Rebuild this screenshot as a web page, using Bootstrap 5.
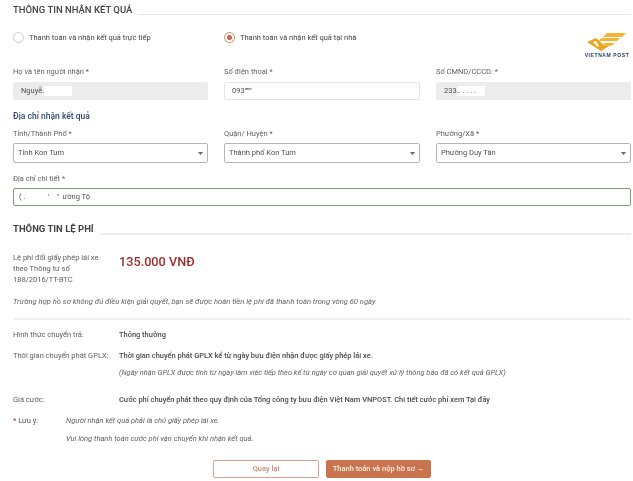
<!DOCTYPE html>
<html lang="vi">
<head>
    <meta charset="UTF-8">
    <meta name="viewport" content="width=device-width, initial-scale=1.0">
    <title>Thông tin nhận kết quả</title>
    <link href="https://cdn.jsdelivr.net/npm/bootstrap@5.3.0/dist/css/bootstrap.min.css" rel="stylesheet">
    <style>
        body {
            font-family: Roboto, "Liberation Sans", sans-serif;
            font-size: 7.5px;
            line-height: 11px;
            color: #555;
            background: #fff;
            overflow: hidden;
        }
        .page-wrap { padding: 4px 2px 0 13px; filter: blur(.4px); }
        .section-head { display: flex; align-items: flex-end; gap: 6px; height: 12px; }
        .section-head h2 { font-size: 9.5px; line-height: 12px; font-weight: 500; color: #444; margin: 0; white-space: nowrap; }
        .section-head i { flex: 1; height: 1px; margin-bottom: 1px; background: #e6e6e6; }
        .section-head.thick { margin-top: 17px; }
        .section-head.thick h2 { font-weight: 700; }
        .section-head.thick i { height: 2px; background: #eeeeee; margin-bottom: 0; }
        .form-grid { display: grid; grid-template-columns: 195px 196px 195px; column-gap: 16px; }
        .radio-row { height: 50px; padding-top: 16px; position: relative; align-items: start; align-content: start; }
        .radio-row .form-check { display: flex; align-items: center; gap: 5px; margin: 0; padding: 0; min-height: 0; }
        .radio-row .form-check-input {
            float: none; margin: 0; width: 11px; height: 11px;
            border: 1px solid #ccc; flex: none;
        }
        .radio-row .form-check-input:checked {
            border-color: #d9866c;
            background-color: #fff;
            background-image: radial-gradient(circle, #c9694a 0 2.2px, transparent 2.7px);
        }
        .radio-row label { color: #444; font-size: 7.5px; }
        .vn-logo { position: absolute; right: 0; top: 17px; width: 48px; text-align: center; }
        .vn-logo svg { display: block; margin: 0 auto; }
        .vn-logo span { display: block; font: 700 5px/6px "Liberation Sans", sans-serif; color: #27406e; letter-spacing: .6px; white-space: nowrap; }
        .field-label { color: #5f5f5f; font-size: 7.5px; line-height: 11px; height: 11px; margin-bottom: 5px; }
        .field-box {
            height: 18px; padding: 0 7px; font-size: 7.5px; line-height: 16px;
            border: 1px solid #e4e4e4; border-radius: 2px; color: #4f4f4f; background-color: #fff;
            box-shadow: none; min-height: 0;
        }
        .field-box.locked { background: #ececec; border-color: #ececec; }
        .field-box.choose {
            height: 20px; padding: 0 14px 0 4px; border: 1px solid #b5b5b5; line-height: 18px; color: #4f4f4f;
            background-image: url("data:image/svg+xml,%3Csvg xmlns='http://www.w3.org/2000/svg' width='5' height='3'%3E%3Cpath d='M0 0h5L2.500 3z' fill='%23666'/%3E%3C/svg%3E");
            background-size: 5px 3px; background-position: right 4px center;
        }
        .choose-grid .field-label { margin-bottom: 4px; }
        .field-box.detail { height: 18px; padding: 0 5px; border: 1px solid #73a373; border-left-width: 1.5px; border-right-width: 1.5px; }
        .detail-label { margin-top: 10px; margin-bottom: 4px; }
        .wipe { display: inline-block; width: 28px; height: 10px; background: #fff; vertical-align: middle; line-height: 10px; }
        .sub-head { color: #33486e; font-size: 8.5px; font-weight: 500; line-height: 12px; margin: 10px 0 6px; }
        .fee-row { display: flex; align-items: flex-start; padding-top: 16.500px; }
        .fee-name { width: 106px; flex: none; padding-right: 15px; line-height: 11px; color: #5f5f5f; }
        .fee-price { color: #9c2a2a; font-size: 12.700px; font-weight: 500; line-height: 16px; margin-top: 2.500px; }
        .note-line { font-style: italic; color: #5f5f5f; font-size: 7.600px; line-height: 11px; margin-top: 11.500px; }
        .rule { height: 2px; background: #f0f0f0; margin-top: 10.500px; }
        .info-row { display: flex; }
        .info-row.first { margin-top: 9px; }
        .info-row.next { margin-top: 10px; }
        .info-row.last { margin-top: 16px; }
        .info-key { width: 106px; flex: none; color: #5f5f5f; }
        .info-val { font-weight: 500; color: #4a4a4a; font-size: 7.450px; }
        .info-val em { display: block; font-weight: 400; color: #5f5f5f; margin-top: 6.500px; }
        .tip-row { display: flex; margin-top: 10px; }
        .tip-key { width: 53px; flex: none; color: #555; }
        .tip-key b { color: #b5472e; font-weight: 500; }
        .tip-val { font-style: italic; color: #5f5f5f; }
        .tip-val div + div { margin-top: 6.500px; }
        .action-row { display: flex; gap: 7px; padding-left: 200px; margin-top: 16px; }
        .action-row .btn { height: 18px; padding: 0; font-size: 7.500px; line-height: 16px; border-radius: 2px; font-weight: 500; }
        .btn-back { width: 106px; color: #c98c78; border: 1px solid #d9a08c; background: #fff; }
        .btn-pay { width: 105px; color: #fbeee8; border: 1px solid #c9744f; background: #c9744f; }
    </style>
</head>
<body>
    <div class="page-wrap">
        <div class="section-head"><h2>THÔNG TIN NHẬN KẾT QUẢ</h2><i></i></div>

        <div class="form-grid radio-row">
            <div class="form-check">
                <input class="form-check-input" type="radio" name="nhanKq" id="kq1">
                <label for="kq1">Thanh toán và nhận kết quả trực tiếp</label>
            </div>
            <div class="form-check">
                <input class="form-check-input" type="radio" name="nhanKq" id="kq2" checked>
                <label for="kq2">Thanh toán và nhận kết quả tại nhà</label>
            </div>
            <div class="vn-logo">
                <svg width="40" height="19" viewBox="0 0 40 19">
                    <path d="M20 0h19l-4 4H16zM14 5h19l-3 3H12zM17 10h11l-4 3h-7z" fill="#f3b437"/>
                    <path d="M0 9l9-4 8 7 0 1 5 0-8 5zM6 9l5 5 1-1-3-5z" fill="#eda51f" fill-rule="evenodd"/>
                </svg>
                <span>VIETNAM POST</span>
            </div>
        </div>

        <div class="form-grid">
            <div>
                <div class="field-label">Họ và tên người nhận *</div>
                <div class="form-control field-box locked">Nguyễ.<span class="wipe"></span></div>
            </div>
            <div>
                <div class="field-label">Số điện thoại *</div>
                <div class="form-control field-box">093’’’’’’</div>
            </div>
            <div>
                <div class="field-label">Số CMND/CCCD: *</div>
                <div class="form-control field-box locked">233<span class="wipe">.. . . . .</span></div>
            </div>
        </div>

        <div class="sub-head">Địa chỉ nhận kết quả</div>

        <div class="form-grid choose-grid">
            <div>
                <div class="field-label">Tỉnh/Thành Phố *</div>
                <select class="form-select field-box choose"><option>Tỉnh Kon Tum</option></select>
            </div>
            <div>
                <div class="field-label">Quận/ Huyện *</div>
                <select class="form-select field-box choose"><option>Thành phố Kon Tum</option></select>
            </div>
            <div>
                <div class="field-label">Phường/Xã *</div>
                <select class="form-select field-box choose"><option>Phường Duy Tân</option></select>
            </div>
        </div>

        <div class="field-label detail-label">Địa chỉ chi tiết *</div>
        <div class="form-control field-box detail">( .&nbsp;&nbsp;&nbsp;&nbsp;&nbsp;&nbsp;&nbsp;&nbsp;&nbsp;&nbsp;&nbsp;&nbsp;' &nbsp;&nbsp;&nbsp;" &nbsp;ường Tộ</div>

        <div class="section-head thick"><h2>THÔNG TIN LỆ PHÍ</h2><i></i></div>

        <div class="fee-row">
            <div class="fee-name">Lệ phí đổi giấy phép lái xe theo Thông tư số 188/2016/TT-BTC</div>
            <div class="fee-price">135.000 VNĐ</div>
        </div>
        <div class="note-line">Trường hợp hồ sơ không đủ điều kiện giải quyết, bạn sẽ được hoàn tiền lệ phí đã thanh toán trong vòng 60 ngày</div>
        <div class="rule"></div>

        <div class="info-row first">
            <div class="info-key">Hình thức chuyển trả:</div>
            <div class="info-val">Thông thường</div>
        </div>
        <div class="info-row next">
            <div class="info-key">Thời gian chuyển phát GPLX:</div>
            <div class="info-val">Thời gian chuyển phát GPLX kể từ ngày bưu điện nhận được giấy phép lái xe.
                <em>(Ngày nhận GPLX được tính từ ngày làm việc tiếp theo kể từ ngày cơ quan giải quyết xử lý thông báo đã có kết quả GPLX)</em>
            </div>
        </div>
        <div class="info-row last">
            <div class="info-key">Giá cước:</div>
            <div class="info-val">Cước phí chuyển phát theo quy định của Tổng công ty bưu điện Việt Nam VNPOST. Chi tiết cước phí xem Tại đây</div>
        </div>
        <div class="tip-row">
            <div class="tip-key"><b>*</b> Lưu ý:</div>
            <div class="tip-val">
                <div>Người nhận kết quả phải là chủ giấy phép lái xe.</div>
                <div>Vui lòng thanh toán cước phí vận chuyển khi nhận kết quả.</div>
            </div>
        </div>

        <div class="action-row">
            <button type="button" class="btn btn-back">Quay lại</button>
            <button type="button" class="btn btn-pay">Thanh toán và nộp hồ sơ →</button>
        </div>
    </div>
    <script src="https://cdn.jsdelivr.net/npm/bootstrap@5.3.0/dist/js/bootstrap.bundle.min.js"></script>
</body>
</html>
